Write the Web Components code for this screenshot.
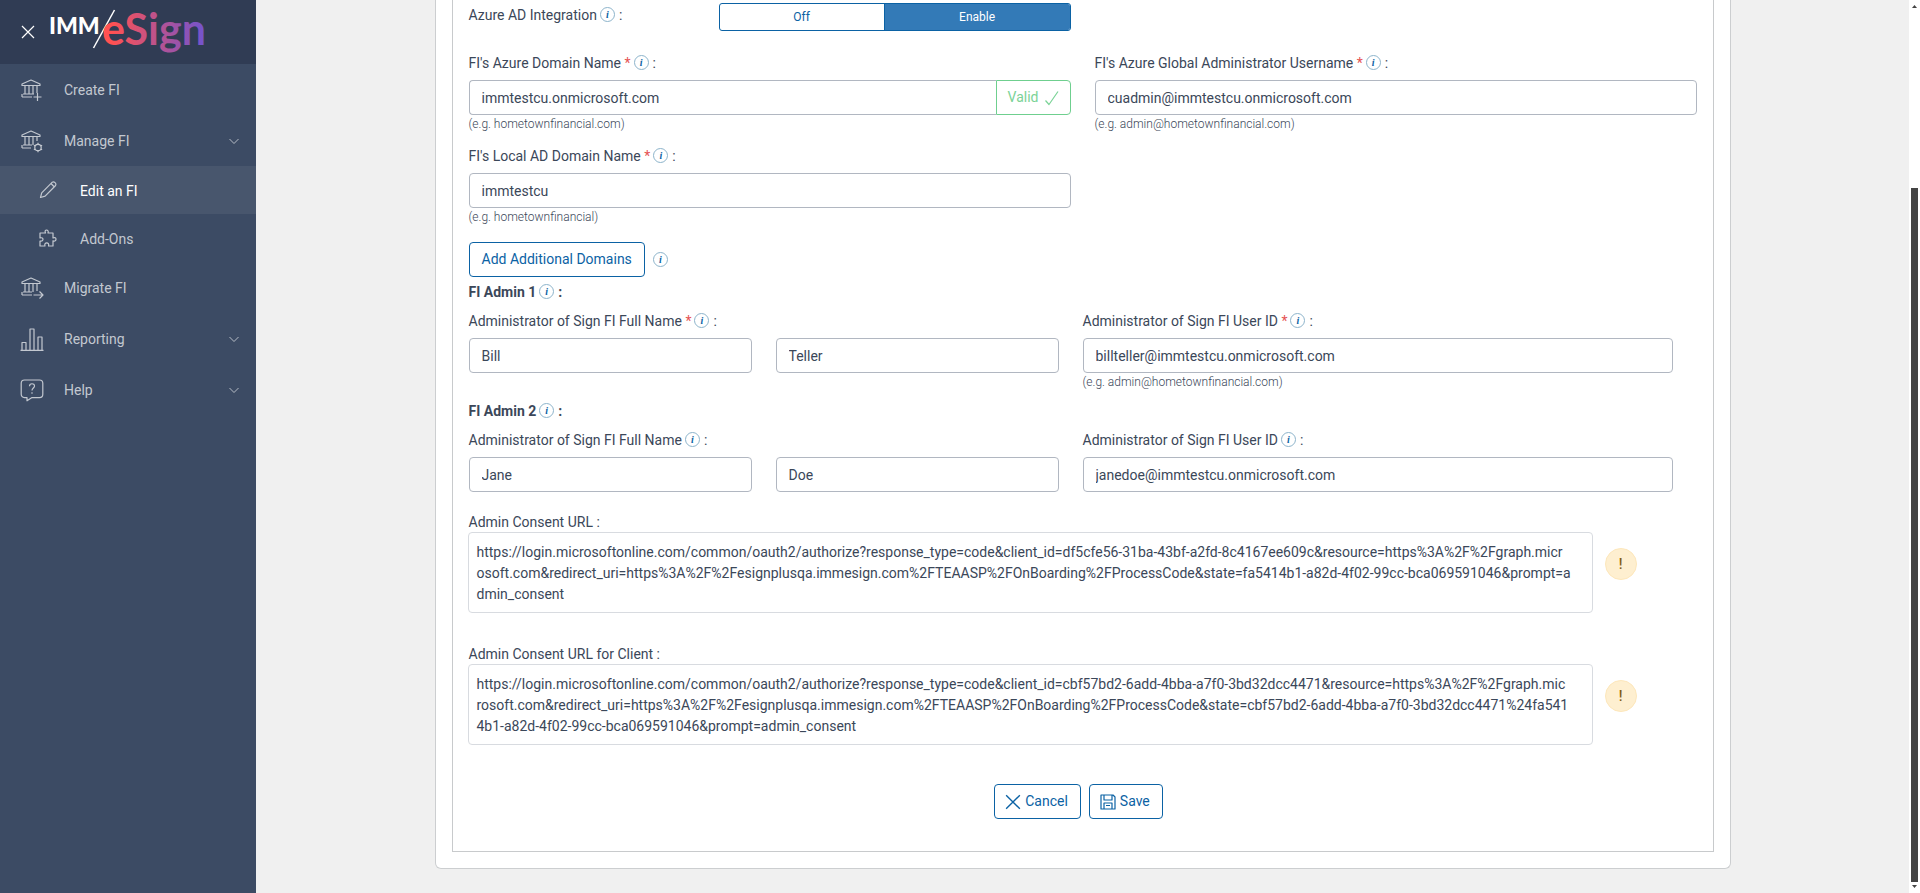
<!DOCTYPE html>
<html lang="en">
<head>
<meta charset="utf-8">
<title>IMM eSign – Edit an FI</title>
<style>
  html, body { height: 100%; }
  body { margin: 0; font: 14px/21px Roboto, "Liberation Sans", sans-serif; color: #3b4759; background: #f0f0f0; overflow: hidden; }
</style>
</head>
<body>
<app-shell></app-shell>
<script>
const define = (name, html, setup) => {
  const tpl = document.createElement('template');
  tpl.innerHTML = html;
  customElements.define(name, class extends HTMLElement {
    constructor() {
      super();
      this.attachShadow({ mode: 'open' }).append(tpl.content.cloneNode(true));
    }
    connectedCallback() {
      if (setup && !this.ready) { this.ready = true; setup(this, this.shadowRoot); }
    }
  });
};

// Each icon: [box size, shapes, optional viewBox]
const ICONS = {
  create: [24, '<path d="M3 8.500V7l9-4 9 4v1.500zM6 8.500V17M10 8.500V17M14 8.500V17M18 8.500V16M4 17h11M3 20h10M3 17v3M18.500 16v8M14.500 20h8"/>', '1 1 24 24'],
  manage: [24, '<path d="M3 8.500V7l9-4 9 4v1.500zM6 8.500V17M10 8.500V17M14 8.500V17M18 8.500V13M4 17h9M3 20h9M3 17v3"/><circle cx="19" cy="19.500" r="3.200"/><path d="M19 14.800v1.500M19 22.700v1.500M14.900 17.200l1.400.8M21.700 21l1.400.8M23.100 17.200l-1.400.8M16.300 21l-1.400.8"/>', '1 1 24 24'],
  migrate: [24, '<path d="M3 8.500V7l9-4 9 4v1.500zM6 8.500V17M10 8.500V17M14 8.500V17M18 8.500V16M4 17h9M3 20h10M3 17v3M14.500 20h9.500M20.500 16.500L24 20l-3.500 3.500"/>', '1 1 24 24'],
  edit: [20, '<path d="M2.500 17.500l1.200-4.700L14.300 2.200c1.700-1.300 4.600 1.500 3.300 3.300L7.100 16.200zM13 3.500L16.400 7"/>'],
  addons: [20, '<path d="M2 5h5.500C5.500 1 11.500 1 10 5h5v5c4-2 4 4.500 0 2.800V18h-4.500c1.500-4.200-5-4.200-3.500 0H2v-5c4 1 4-4.500 0-3z"/>'],
  report: [24, '<path d="M.500 23.300h23M2 23v-7.500h4V23M10 23V2h4v21M18 23V10h4v13"/>'],
  help: [24, '<path d="M4.500 2h15c2 0 3.300 1.300 3.300 3.300v11c0 2-1.300 3.300-3.300 3.300H12L7 22.800v-3.200H4.500c-2 0-3.300-1.300-3.300-3.300v-11C1.200 3.300 2.500 2 4.500 2z"/><path d="M9.500 8.200c0-3.300 5-3.200 5-.2 0 2-2.500 2-2.500 4.500M12 14.200v1.600"/>'],
  chevron: [10, '<path stroke-width=".9" d="M.500 3L5 7.500 9.500 3"/>'],
  close: [14, '<path d="M1 1l12 12M13 1L1 13"/>'],
  check: [16, '<path d="M1.500 10.500L5 14.500 14 1.500"/>'],
  save: [16, '<path d="M1 1h12l2 2v12H1zM4 1v5h8V1M4 15V9h8v6M6 11.500h4"/>']
};

define('ui-icon', `
<style>
  :host { display: inline-flex; flex: none; }
  svg { display: block; fill: none; stroke: currentColor; stroke-width: 1.200; stroke-linejoin: round; }
</style>`, (el, root) => {
  const [box, body, view] = ICONS[el.getAttribute('name')];
  const size = el.getAttribute('size') || box;
  root.innerHTML += `<svg aria-hidden="true" width="${size}" height="${size}" viewBox="${view || `0 0 ${box} ${box}`}">${body}</svg>`;
});

define('info-tip', `
<style>
  :host { display: inline-flex; }
  button { box-sizing: border-box; width: 15px; height: 15px; padding: 0; border: 1px solid #8db4cb; border-radius: 50%;
    background: none; color: #0b62a4; font: italic bold 10px/13px "Liberation Serif", serif; text-align: center; }
</style>
<button type="button" aria-label="More information">i</button>`);

define('app-logo', `
<style>:host { display: block; } svg { display: block; }</style>
<svg width="164" height="60" viewBox="0 0 164 60" role="img" aria-label="IMM eSign">
  <defs><linearGradient id="g" gradientUnits="userSpaceOnUse" x1="65" y1="0" x2="159" y2="0">
    <stop offset="0" stop-color="#ff5152"/><stop offset="1" stop-color="#7054d0"/>
  </linearGradient></defs>
  <text x="2" y="34" font-family="Lato, sans-serif" font-weight="900" font-size="23" fill="#fff">IMM</text>
  <path d="M46.500 48L67.500 10" stroke="#fff" stroke-width="1.500"/>
  <text x="55" y="45" font-family="Lato, sans-serif" font-weight="700" font-size="43" fill="url(#g)">eSign</text>
</svg>`);

define('nav-item', `
<style>
  :host { display: block; color: #c3c8d0; }
  a { display: flex; align-items: center; box-sizing: border-box; height: 51px; padding: 0 17px 0 20px; color: inherit; text-decoration: none; }
  .icon { width: 44px; display: flex; }
  .label { flex: 1; padding-top: 2px; }
  :host([sub]) a { height: 48px; padding-left: 38px; }
  :host([sub]) .icon { width: 42px; }
  :host([current]) { background: #48566d; }
  :host([current]) .label { color: #fff; }
</style>
<a href="#"><span class="icon"></span><span class="label"><slot></slot></span></a>`, (el, root) => {
  root.querySelector('.icon').innerHTML = `<ui-icon name="${el.getAttribute('icon')}"></ui-icon>`;
  if (el.hasAttribute('expandable')) root.querySelector('a').insertAdjacentHTML('beforeend', '<ui-icon name="chevron"></ui-icon>');
  if (el.hasAttribute('current')) root.querySelector('a').setAttribute('aria-current', 'page');
});

define('side-nav', `
<style>
  :host { display: block; background: #3c4b64; }
  header { display: flex; align-items: center; gap: 12px; height: 64px; padding-left: 21px; background: #303c54; color: #fff; }
  button { display: flex; padding: 0; border: 0; background: none; color: inherit; }
  app-logo { height: 64px; }
</style>
<header><button type="button" aria-label="Close menu"><ui-icon name="close"></ui-icon></button><app-logo></app-logo></header>
<nav>
  <nav-item icon="create">Create FI</nav-item>
  <nav-item icon="manage" expandable>Manage FI</nav-item>
  <nav-item icon="edit" sub current>Edit an FI</nav-item>
  <nav-item icon="addons" sub>Add-Ons</nav-item>
  <nav-item icon="migrate">Migrate FI</nav-item>
  <nav-item icon="report" expandable>Reporting</nav-item>
  <nav-item icon="help" expandable>Help</nav-item>
</nav>`);

const labelHtml = el => el.getAttribute('label')
  + (el.hasAttribute('required') ? ' <span class="req">*</span>' : '');

define('text-field', `
<style>
  :host { display: block; }
  .head { display: flex; align-items: center; height: 21px; margin-bottom: 6px; }
  .head info-tip { margin: 0 4px 2px 3px; }
  .req { color: #e55353; }
  .box { display: flex; }
  input { box-sizing: border-box; flex: 1; min-width: 0; height: 35px; padding: 0 12px; border: 1px solid #b1b7c1; border-radius: 4px;
    background: #fff; color: #3b4759; font: inherit; }
  .status { display: flex; align-items: center; gap: 5px; padding: 0 10px 0 11px; border: 1px solid #6fcf8f; border-radius: 0 4px 4px 0; color: #7bd397; }
  :host([valid]) input { border-right: 0; border-radius: 4px 0 0 4px; }
  .hint { font-size: 12px; line-height: 18px; font-weight: 300; }
</style>
<div class="head"><label for="f"></label><info-tip></info-tip><span>:</span></div>
<div class="box"><input id="f" type="text"></div>`, (el, root) => {
  const input = root.querySelector('input');
  input.value = el.getAttribute('value');
  if (el.hasAttribute('label')) root.querySelector('label').innerHTML = labelHtml(el);
  else { root.querySelector('.head').innerHTML = ''; input.setAttribute('aria-label', el.getAttribute('name')); }
  if (el.hasAttribute('valid')) root.querySelector('.box').insertAdjacentHTML('beforeend', '<span class="status">Valid <ui-icon name="check"></ui-icon></span>');
  if (el.hasAttribute('hint')) {
    const hint = document.createElement('div');
    hint.className = 'hint';
    hint.textContent = el.getAttribute('hint');
    root.append(hint);
  }
});

define('url-field', `
<style>
  :host { display: block; }
  label { display: block; line-height: 19px; }
  .row { display: flex; align-items: flex-start; gap: 12px; margin-left: -1px; }
  textarea { box-sizing: border-box; flex: 1; height: 81px; padding: 9px 20px 7px 8px; border: 1px solid #d8dbe0; border-radius: 4px; resize: none; overflow: hidden;
    background: #fff; color: #3b4759; font: inherit; word-break: break-all; }
  .warn { box-sizing: border-box; width: 32px; height: 32px; margin-top: 16px; padding: 0; border: 1px solid #fde7bb; border-radius: 50%; background: #feefd0; color: #815c15; font: 500 14px/30px Roboto, sans-serif; }
</style>
<label for="u"></label>
<div class="row"><textarea id="u" readonly></textarea><button class="warn" type="button">!</button></div>`, (el, root) => {
  root.querySelector('label').textContent = el.getAttribute('label') + ' :';
  root.querySelector('textarea').value = el.textContent.trim();
});

define('action-button', `
<style>
  :host { display: inline-flex; }
  button { display: flex; align-items: center; gap: 4px; box-sizing: border-box; height: 35px; padding: 0 12px; border: 1px solid #0b62a4; border-radius: 4px;
    background: #fff; color: #0b62a4; font: inherit; }
  :host([icon]) button { padding-left: 10px; }
</style>
<button type="button"><slot></slot></button>`, (el, root) => {
  if (el.hasAttribute('icon')) root.querySelector('button').insertAdjacentHTML('afterbegin', `<ui-icon size="16" name="${el.getAttribute('icon')}"></ui-icon>`);
});

define('switch-group', `
<style>
  :host { display: flex; height: 28px; box-sizing: border-box; border: 1px solid #0b62a4; border-radius: 3px; overflow: hidden; background: #fff; }
  button { flex: 8; padding: 0; border: 0; background: none; color: #0b62a4; font: 12px/18px Roboto, sans-serif; }
  .on { flex: 9; background: #337ab7; border-left: 1px solid #0b62a4; color: #fff; }
</style>
<button type="button" aria-pressed="false">Off</button><button class="on" type="button" aria-pressed="true">Enable</button>`);

define('section-title', `
<style>
  :host { display: flex; align-items: center; height: 21px; font-weight: 700; }
  info-tip { margin: 0 4px 2px 3px; }
  h2 { margin: 0; font: inherit; }
</style>
<h2><slot></slot></h2><info-tip></info-tip><span>:</span>`);

define('fi-form', `
<style>
  :host { display: block; box-sizing: border-box; width: 100%; max-width: 1296px; margin: 0 auto; padding: 0 16px 16px; border: 1px solid #ccced0; border-top: 0; border-radius: 0 0 6px 6px; background: #fff; }
  form { padding: 3px 16px 32px; border: 1px solid #c8cacc; border-top: 0; }
  .two { display: grid; grid-template-columns: 1fr 1fr; column-gap: 24px; }
  .azure { display: flex; }
  .azure .name { display: flex; align-items: center; width: 250px; height: 24px; }
  .azure info-tip { margin: 0 4px 2px 3px; }
  switch-group { flex: 1; }
  .domains { margin-top: 22px; }
  .local { margin-top: 13px; }
  .add { display: flex; align-items: center; gap: 8px; margin: 16px 0 5px; }
  .admin { margin: 8px 24px 0 0; }
  .admin .two { align-items: end; }
  .pair { align-self: start; }
  .second { margin-top: 10px; }
  .urls { display: grid; gap: 32px; margin: 21px 60px 0 0; }
  .actions { display: flex; justify-content: center; gap: 8px; margin-top: 39px; padding-right: 8px; }
</style>
<form>
  <div class="two">
    <div class="azure"><div class="name"><span>Azure AD Integration</span><info-tip></info-tip><span>:</span></div><switch-group></switch-group></div>
  </div>
  <div class="two domains">
    <text-field label="FI's Azure Domain Name" required value="immtestcu.onmicrosoft.com" valid hint="(e.g. hometownfinancial.com)"></text-field>
    <text-field label="FI's Azure Global Administrator Username" required value="cuadmin@immtestcu.onmicrosoft.com" hint="(e.g. admin@hometownfinancial.com)"></text-field>
  </div>
  <div class="two local">
    <text-field label="FI's Local AD Domain Name" required value="immtestcu" hint="(e.g. hometownfinancial)"></text-field>
  </div>
  <div class="add"><action-button>Add Additional Domains</action-button><info-tip></info-tip></div>
  <section-title>FI Admin 1</section-title>
  <div class="admin two">
    <div class="two pair">
      <text-field label="Administrator of Sign FI Full Name" required value="Bill"></text-field>
      <text-field name="Last name" value="Teller"></text-field>
    </div>
    <text-field label="Administrator of Sign FI User ID" required value="billteller@immtestcu.onmicrosoft.com" hint="(e.g. admin@hometownfinancial.com)"></text-field>
  </div>
  <section-title class="second">FI Admin 2</section-title>
  <div class="admin two">
    <div class="two pair">
      <text-field label="Administrator of Sign FI Full Name" value="Jane"></text-field>
      <text-field name="Last name" value="Doe"></text-field>
    </div>
    <text-field label="Administrator of Sign FI User ID" value="janedoe@immtestcu.onmicrosoft.com"></text-field>
  </div>
  <div class="urls">
    <url-field label="Admin Consent URL">https://login.microsoftonline.com/common/oauth2/authorize?response_type=code&amp;client_id=df5cfe56-31ba-43bf-a2fd-8c4167ee609c&amp;resource=https%3A%2F%2Fgraph.micr
osoft.com&amp;redirect_uri=https%3A%2F%2Fesignplusqa.immesign.com%2FTEAASP%2FOnBoarding%2FProcessCode&amp;state=fa5414b1-a82d-4f02-99cc-bca069591046&amp;prompt=admin_consent</url-field>
    <url-field label="Admin Consent URL for Client">https://login.microsoftonline.com/common/oauth2/authorize?response_type=code&amp;client_id=cbf57bd2-6add-4bba-a7f0-3bd32dcc4471&amp;resource=https%3A%2F%2Fgraph.mic
rosoft.com&amp;redirect_uri=https%3A%2F%2Fesignplusqa.immesign.com%2FTEAASP%2FOnBoarding%2FProcessCode&amp;state=cbf57bd2-6add-4bba-a7f0-3bd32dcc4471%24fa5414b1-a82d-4f02-99cc-bca069591046&amp;prompt=admin_consent</url-field>
  </div>
  <div class="actions"><action-button icon="close">Cancel</action-button><action-button icon="save">Save</action-button></div>
</form>`);

define('scroll-track', `
<style>
  :host { display: flex; flex-direction: column; align-items: flex-end; padding-right: 2px; background: #fff; }
  svg { display: block; fill: #444; }
  .thumb { flex: 1; width: 7px; margin-top: 177px; background: #444; }
</style>
<svg width="7" height="11" viewBox="0 0 7 11"><path d="M1 8h5L3.500 5z"/></svg>
<div class="thumb"></div>
<svg width="7" height="11" viewBox="0 0 7 11"><path d="M1 3h5L3.500 6z"/></svg>`);

define('app-shell', `
<style>
  :host { display: grid; grid-template-columns: 256px 1fr 11px; min-height: 100vh; }
  main { padding-bottom: 24px; }
</style>
<side-nav></side-nav>
<main><fi-form></fi-form></main>
<scroll-track></scroll-track>`);
</script>
</body>
</html>
